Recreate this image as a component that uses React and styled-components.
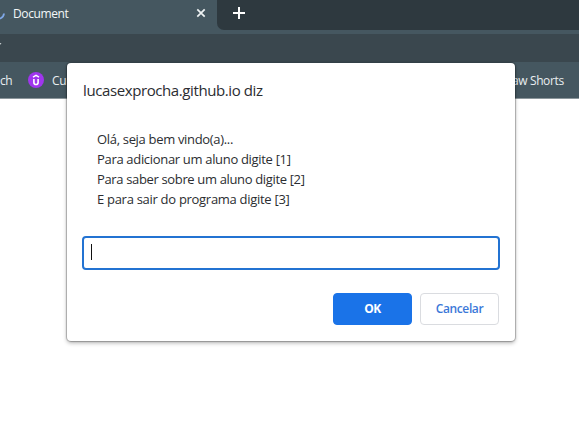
import React from 'react';
import styled, { createGlobalStyle } from 'styled-components';

const GlobalStyle = createGlobalStyle`
  * { box-sizing: border-box; }
  body { margin: 0; background: #fff; overflow: hidden; }
`;

const Browser = styled.div`
  position: relative;
  width: 579px;
  height: 439px;
  overflow: hidden;
  background: #fff;
  font-family: "Open Sans", "Noto Sans", sans-serif;
  font-size: 12px;
  white-space: nowrap;
`;

const TabStrip = styled.div`
  display: flex;
  height: 30px;
  background: #455760;
`;

const Tab = styled.div`
  display: flex;
  align-items: center;
  width: 217px;
  height: 26px;
  color: #f4f7f8;
`;

const Spinner = styled.svg`
  width: 6px;
  height: 26px;
  margin-right: 7px;
`;

const TabTitle = styled.span`
  flex: 1;
  letter-spacing: -0.4px;
`;

const CloseIcon = styled.svg`
  width: 10px;
  height: 10px;
  margin-right: 11px;
`;

const Frame = styled.div`
  flex: 1;
  padding: 7px 0 0 16px;
  background: #2e393f;
  border-bottom-left-radius: 7px;
`;

const PlusIcon = styled.svg`
  display: block;
  width: 12px;
  height: 12px;
`;

const Toolbar = styled.div`
  height: 32px;
  border-top: 4px solid #455760;
  background: #3a474e;
`;

const ToolbarMark = styled.svg`
  display: block;
  width: 3px;
  height: 20px;
`;

const Bookmarks = styled.div`
  display: flex;
  align-items: center;
  height: 37px;
  background: #455760;
  border-bottom: 1px solid #8b969b;
  color: #e9eef0;
`;

const Bookmark = styled.span`
  width: ${({ $width }) => $width}px;
  letter-spacing: ${({ $spacing }) => $spacing}px;
  margin-left: ${({ $left }) => $left || 0}px;
`;

const SiteIcon = styled.svg`
  width: 16px;
  height: 16px;
  margin: 0 8px 0 16px;
`;

const Dialog = styled.section`
  position: absolute;
  left: 67px;
  top: 63px;
  width: 448px;
  height: 278px;
  padding: 16px;
  display: flex;
  flex-direction: column;
  border-radius: 4px;
  background: #fff;
  color: #2b2d31;
  box-shadow: 0 0 1px 1px rgba(0, 0, 0, 0.25), 0 2px 4px rgba(0, 0, 0, 0.3);
`;

const Title = styled.h1`
  margin: 0;
  font-size: 15px;
  font-weight: 400;
  line-height: 22px;
  letter-spacing: -0.4px;
`;

const Message = styled.div`
  margin: 28px 0 0 14px;
  font-size: 13px;
  line-height: 20px;
`;

const Line = styled.div`
  letter-spacing: ${({ $spacing }) => $spacing}px;
`;

const PromptField = styled.div`
  display: flex;
  align-items: center;
  width: 418px;
  height: 34px;
  margin: 27px 0 0 -1px;
  padding: 0 0 2px 7px;
  border: 2px solid #2373d2;
  border-radius: 4px;
`;

const Caret = styled.span`
  width: 1px;
  height: 16px;
  background: #111;
`;

const Actions = styled.div`
  display: flex;
  justify-content: flex-end;
  gap: 8px;
  margin-top: 23px;
`;

const Button = styled.button`
  width: 79px;
  height: 32px;
  padding: 0 0 1px;
  border: 1px solid ${({ $primary }) => ($primary ? '#1a73e8' : '#dadce0')};
  border-radius: 4px;
  background: ${({ $primary }) => ($primary ? '#1a73e8' : '#fff')};
  color: ${({ $primary }) => ($primary ? '#fff' : '#3b78d8')};
  font: ${({ $primary }) => ($primary ? 700 : 600)} 12px "Open Sans", "Noto Sans", sans-serif;
  letter-spacing: ${({ $primary }) => ($primary ? -0.5 : -0.4)}px;
`;

const lines = [
  { text: 'Olá, seja bem vindo(a)...', spacing: -0.32 },
  { text: 'Para adicionar um aluno digite [1]', spacing: -0.32 },
  { text: 'Para saber sobre um aluno digite [2]', spacing: -0.35 },
  { text: 'E para sair do programa digite [3]', spacing: -0.29 },
];

export default function App() {
  return (
    <Browser>
      <GlobalStyle />
      <TabStrip>
        <Tab>
          <Spinner viewBox="0 0 6 26" fill="none">
            <path d="M4 13.5C3.8 16 2.2 18 -1 19" stroke="#7fa8e8" strokeWidth="1.8" />
          </Spinner>
          <TabTitle>Document</TabTitle>
          <CloseIcon viewBox="0 0 10 10" fill="none">
            <path d="M1.3 1.3L8.7 8.7M8.7 1.3L1.3 8.7" stroke="#eef2f3" strokeWidth="1.7" />
          </CloseIcon>
        </Tab>
        <Frame>
          <PlusIcon viewBox="0 0 12 12" fill="none">
            <path d="M6 0V12M0 6H12" stroke="#fff" strokeWidth="2" />
          </PlusIcon>
        </Frame>
      </TabStrip>
      <Toolbar>
        <ToolbarMark viewBox="0 0 3 20">
          <path d="M0 9H1.5L0 11Z" fill="#c3cacd" />
        </ToolbarMark>
      </Toolbar>
      <Bookmarks>
        <Bookmark $width={12} $spacing={-0.5}>ch</Bookmark>
        <SiteIcon viewBox="0 0 16 16" fill="none">
          <circle cx="8" cy="8" r="8" fill="#a035ee" />
          <path d="M5 5.2L8 3.4L11 5.2" stroke="#fff" strokeWidth="1.4" />
          <path d="M5.9 7V10.5C5.9 13.2 10.1 13.2 10.1 10.5V7" stroke="#fff" strokeWidth="1.6" />
        </SiteIcon>
        <Bookmark $width={20} $spacing={-0.2}>Cu</Bookmark>
        <Bookmark $width={60} $spacing={-0.38} $left={440}>aw Shorts</Bookmark>
      </Bookmarks>
      <Dialog role="dialog">
        <Title>lucasexprocha.github.io diz</Title>
        <Message>
          {lines.map(({ text, spacing }) => (
            <Line key={text} $spacing={spacing}>{text}</Line>
          ))}
        </Message>
        <PromptField>
          <Caret />
        </PromptField>
        <Actions>
          <Button $primary>OK</Button>
          <Button>Cancelar</Button>
        </Actions>
      </Dialog>
    </Browser>
  );
}
